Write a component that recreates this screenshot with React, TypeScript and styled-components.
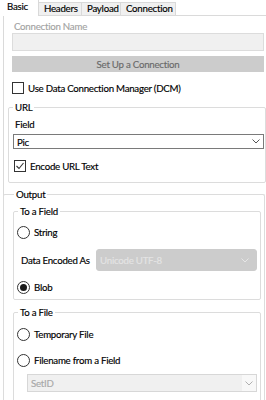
import styled, { createGlobalStyle } from 'styled-components';

const GlobalStyle = createGlobalStyle`
  html, body {
    margin: 0;
    padding: 0;
    background: #ffffff;
  }
  body {
    font-family: Lato, 'Noto Sans', sans-serif;
    font-size: 9.7px;
    letter-spacing: -0.25px;
    color: #000000;
    overflow: hidden;
    -webkit-text-stroke: 0.15px currentColor;
  }
`;

const Window = styled.div`
  width: 266px;
  height: 400px;
  overflow: hidden;
  background: #ffffff;
`;

const TabStrip = styled.div`
  display: flex;
  align-items: flex-end;
  height: 15px;
  padding-left: 3px;
`;

const Tab = styled.div<{ $active?: boolean; $w: number }>`
  width: ${(p) => p.$w}px;
  height: ${(p) => (p.$active ? '16px' : '13px')};
  box-sizing: border-box;
  display: flex;
  align-items: center;
  padding: ${(p) => (p.$active ? '0 0 2px 4px' : '0 0 0 5px')};
  background: ${(p) => (p.$active ? '#ffffff' : '#f0f0f0')};
  border-right: 1px solid #d9d9d9;
  border-top: ${(p) => (p.$active ? 'none' : '1px solid #d9d9d9')};
  margin-bottom: ${(p) => (p.$active ? '-1px' : '0')};
  position: relative;
  line-height: 1;
  white-space: nowrap;
`;

const Page = styled.div`
  margin-left: 3px;
  border-top: 1px solid #dadada;
  border-left: 1px solid #dadada;
  padding: 0 2px 0 8px;
  height: 385px;
`;

const DimLabel = styled.div`
  padding-top: 4px;
  line-height: 13px;
  color: #a3a3a3;
  margin-left: 2px;
`;

const TextBox = styled.div`
  height: 18px;
  box-sizing: border-box;
  background: #f0f0f0;
  border: 1px solid #dcdcdc;
`;

const Button = styled.div`
  margin-top: 5px;
  height: 16px;
  display: flex;
  align-items: center;
  justify-content: center;
  background: #cccccc;
  color: #6a6a6a;
`;

const CheckRow = styled.label<{ $indent?: number; $top?: number }>`
  display: flex;
  align-items: center;
  gap: 4px;
  height: 14px;
  margin-top: ${(p) => p.$top ?? 0}px;
  margin-left: ${(p) => p.$indent ?? 0}px;
  line-height: 14px;
  white-space: nowrap;
`;

const Box = styled.span`
  width: 12px;
  height: 12px;
  box-sizing: border-box;
  border: 1px solid #333333;
  background: #ffffff;
  display: flex;
  align-items: center;
  justify-content: center;
  flex: none;
`;

const Radio = styled.span<{ $on?: boolean }>`
  width: 13px;
  height: 13px;
  box-sizing: border-box;
  border: 1px solid #333333;
  border-radius: 50%;
  background: #ffffff;
  display: flex;
  align-items: center;
  justify-content: center;
  flex: none;

  &::after {
    content: '';
    display: ${(p) => (p.$on ? 'block' : 'none')};
    width: 7px;
    height: 7px;
    border-radius: 50%;
    background: #1a1a1a;
  }
`;

const Group = styled.fieldset<{ $left: number; $right: number; $top: number; $pl: number; $pr: number; $pb: number }>`
  margin: ${(p) => p.$top}px ${(p) => p.$right}px 0 ${(p) => p.$left}px;
  padding: 0 ${(p) => p.$pr}px ${(p) => p.$pb}px ${(p) => p.$pl}px;
  border: 1px solid #dcdcdc;
  border-radius: 2px;
  min-width: 0;
`;

const Legend = styled.legend<{ $shift?: number }>`
  padding: 0 2px;
  margin-left: ${(p) => p.$shift ?? 0}px;
  line-height: 13px;
`;

const FieldLabel = styled.div`
  margin: 3px 0 0 2px;
  line-height: 14px;
`;

const SelectRow = styled.div`
  display: flex;
  margin-top: 3px;
`;

const Select = styled.div<{ $variant?: 'normal' | 'disabled' | 'flat'; $height: number }>`
  height: ${(p) => p.$height}px;
  box-sizing: border-box;
  display: flex;
  align-items: center;
  justify-content: space-between;
  padding-left: 3px;
  flex: 1;
  border: 1px solid
    ${(p) => (p.$variant === 'normal' ? '#7a7a7a' : p.$variant === 'flat' ? '#d7d7d7' : '#cccccc')};
  border-radius: ${(p) => (p.$variant === 'disabled' ? '3px' : '0')};
  background: ${(p) => (p.$variant === 'normal' ? '#ffffff' : p.$variant === 'flat' ? '#f0f0f0' : '#cccccc')};
  color: ${(p) => (p.$variant === 'normal' ? '#000000' : p.$variant === 'flat' ? '#a8a8a8' : '#e4e4e4')};
`;

const Chevron = styled.span<{ $w?: number; $bg?: string }>`
  display: flex;
  align-items: center;
  justify-content: center;
  width: ${(p) => p.$w ?? 14}px;
  align-self: stretch;
  background: ${(p) => p.$bg ?? 'transparent'};
`;

const EncodedRow = styled.div`
  display: flex;
  align-items: center;
  margin-top: 10px;
`;

const EncodedLabel = styled.span`
  width: 79px;
  padding-left: 4px;
  flex: none;
  box-sizing: border-box;
  white-space: nowrap;
`;

const SetIdWrap = styled.div`
  display: flex;
  margin: 7px 0 0 10px;
`;

function ChevronIcon({ color }: { color: string }) {
  return (
    <svg width="8" height="5" viewBox="0 0 8 5">
      <path d="M0.5 0.5 L4 4 L7.5 0.5" fill="none" stroke={color} strokeWidth="1" />
    </svg>
  );
}

function CheckMark() {
  return (
    <svg width="10" height="10" viewBox="0 0 10 10">
      <path d="M1.5 5 L4 7.5 L8.5 2" fill="none" stroke="#333333" strokeWidth="1.1" />
    </svg>
  );
}

export default function App() {
  return (
    <Window>
      <GlobalStyle />
      <TabStrip>
        <Tab $active $w={36}>Basic</Tab>
        <Tab $w={43}>Headers</Tab>
        <Tab $w={39}>Payload</Tab>
        <Tab $w={55}>Connection</Tab>
      </TabStrip>
      <Page>
        <DimLabel>Connection Name</DimLabel>
        <TextBox />
        <Button>Set Up a Connection</Button>
        <CheckRow $top={9}>
          <Box />
          <span>Use Data Connection Manager (DCM)</span>
        </CheckRow>

        <Group $left={-4} $right={-2} $top={6} $pl={4} $pr={1} $pb={9}>
          <Legend>URL</Legend>
          <FieldLabel>Field</FieldLabel>
          <SelectRow>
            <Select $variant="normal" $height={15}>
              <span>Pic</span>
              <Chevron>
                <ChevronIcon color="#555555" />
              </Chevron>
            </Select>
          </SelectRow>
          <CheckRow $top={10} $indent={1}>
            <Box>
              <CheckMark />
            </Box>
            <span>Encode URL Text</span>
          </CheckRow>
        </Group>

        <Group $left={-9} $right={-1} $top={5} $pl={9} $pr={3} $pb={0} style={{ borderBottom: 'none' }}>
          <Legend $shift={1}>Output</Legend>
          <Group $left={0} $right={0} $top={4} $pl={3} $pr={3} $pb={5}>
            <Legend $shift={1}>To a Field</Legend>
            <CheckRow $top={7}>
              <Radio />
              <span>String</span>
            </CheckRow>
            <EncodedRow>
              <EncodedLabel>Data Encoded As</EncodedLabel>
              <Select $variant="disabled" $height={22}>
                <span>Unicode UTF-8</span>
                <Chevron $w={22}>
                  <ChevronIcon color="#e6e6e6" />
                </Chevron>
              </Select>
            </EncodedRow>
            <CheckRow $top={9}>
              <Radio $on />
              <span>Blob</span>
            </CheckRow>
          </Group>
          <Group $left={0} $right={0} $top={6} $pl={3} $pr={3} $pb={20}>
            <Legend $shift={1}>To a File</Legend>
            <CheckRow $top={8}>
              <Radio />
              <span>Temporary File</span>
            </CheckRow>
            <CheckRow $top={12}>
              <Radio />
              <span>Filename from a Field</span>
            </CheckRow>
            <SetIdWrap>
              <Select $variant="flat" $height={18}>
                <span>SetID</span>
                <Chevron $bg="#f8f8f8">
                  <ChevronIcon color="#b0b0b0" />
                </Chevron>
              </Select>
            </SetIdWrap>
          </Group>
        </Group>
      </Page>
    </Window>
  );
}
